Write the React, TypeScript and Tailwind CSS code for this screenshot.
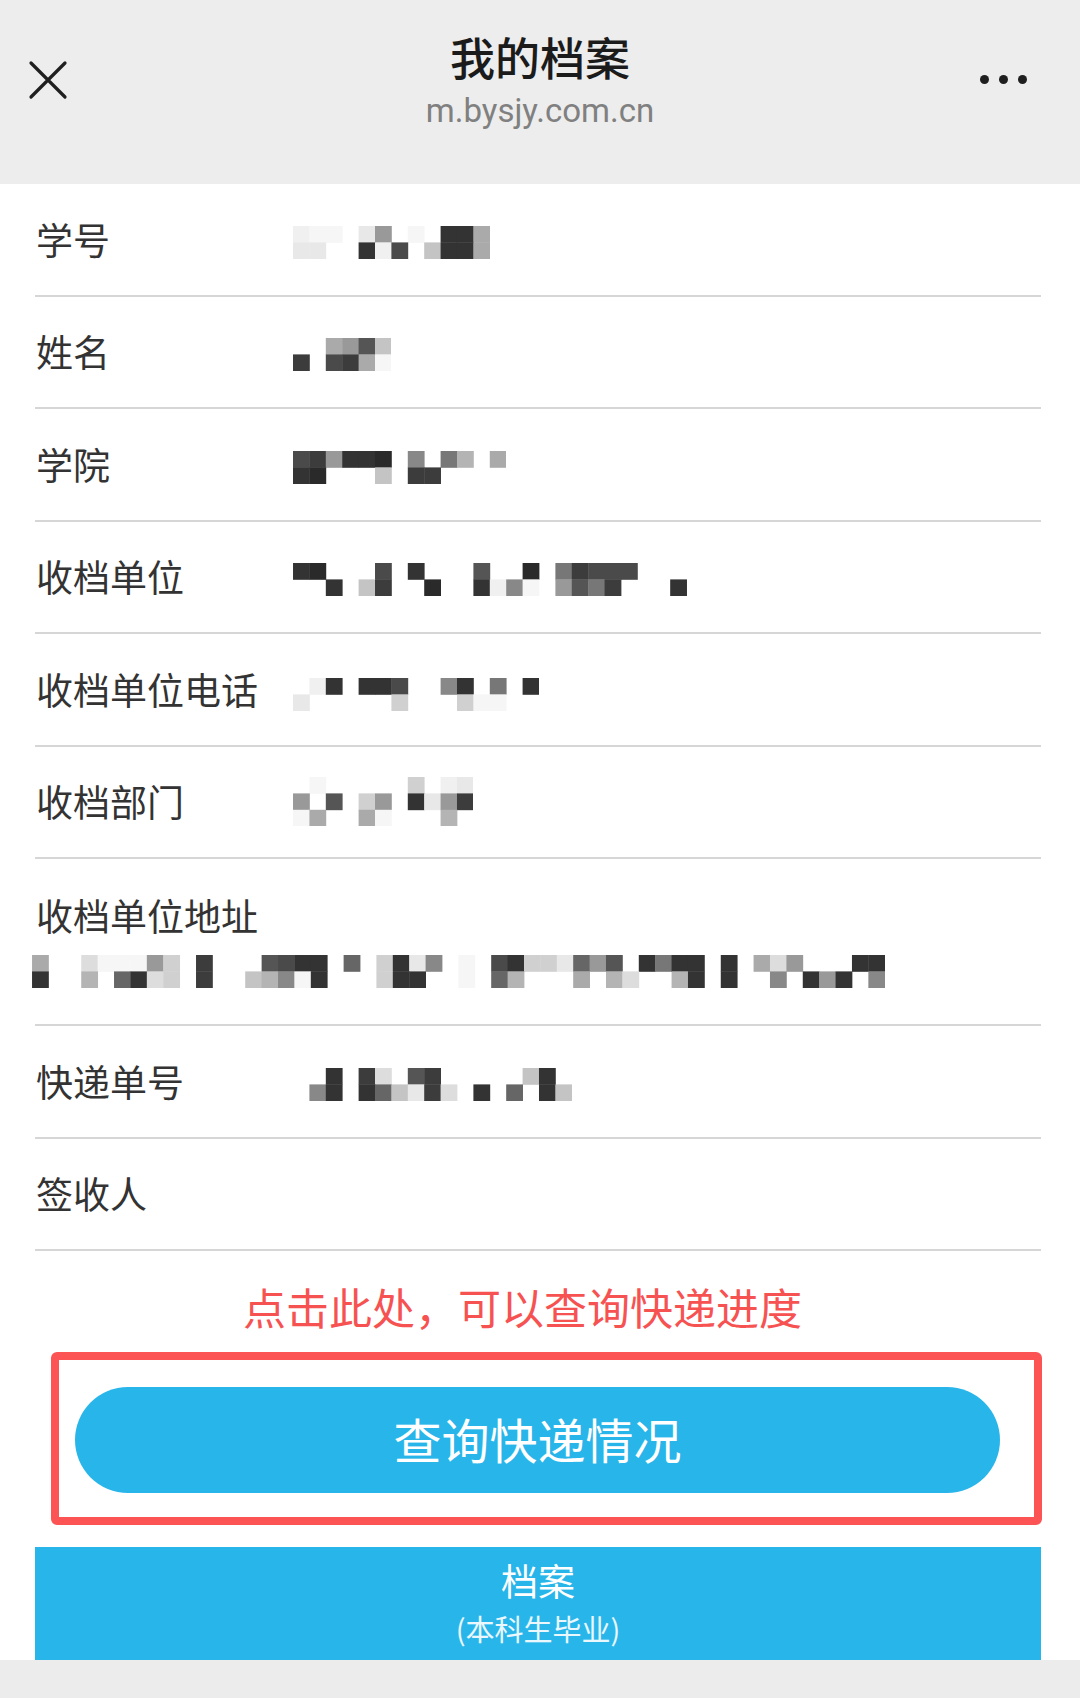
import React from 'react';

// grey levels used by the pixelated (masked) values
const SHADES: Record<string, string> = {
  a: '#2a2a2a',
  b: '#333333',
  c: '#3c3c3c',
  d: '#4a4a4a',
  e: '#555555',
  f: '#666666',
  g: '#777777',
  h: '#888888',
  i: '#999999',
  j: '#aaaaaa',
  k: '#b4b4b4',
  l: '#c4c4c4',
  m: '#d0d0d0',
  n: '#dddddd',
  o: '#e8e8e8',
  p: '#f0f0f0',
  q: '#f6f6f6',
};

const Mosaic: React.FC<{ rows: string[]; className?: string }> = ({ rows, className }) => {
  const cell = 16.4;
  const w = rows[0].length * cell;
  const h = rows.length * cell;
  return (
    <svg width={w} height={h} viewBox={`0 0 ${w} ${h}`} className={className}>
      {rows.flatMap((row, y) =>
        row.split('').map((ch, x) =>
          ch === '.' ? null : (
            <rect key={`${x}-${y}`} x={x * cell} y={y * cell} width={cell + 0.4} height={cell + 0.4} fill={SHADES[ch]} />
          )
        )
      )}
    </svg>
  );
};

type Field = { label: string; value?: string[]; shift?: string };

const TOP_FIELDS: Field[] = [
  { label: '学号', value: ['pqq.oi.q.bbj', 'oo..bpd.lbbj'] },
  { label: '姓名', value: ['..jiel', 'c.dcjq'] },
  { label: '学院', value: ['dcibba.h.gk.j', 'ba...l.cc....'] },
  { label: '收档单位', value: ['ba...d.b...e..a.gcddd....', '..b.lc..a..bphq.iegc...b.'] },
  { label: '收档单位电话', value: ['.pb.bbd..hb.g.b', 'o.....m...mqq..'], shift: 'mt-[10px]' },
  { label: '收档部门', value: ['.q.....m.po', 'i.e.mi.boic', 'qj..jq...k.'], shift: 'mt-0' },
];

const ADDRESS = [
  'j..nqqqim.c...edbb.f.mboh.q.dbmmofie.bgbb.b.jni...bb',
  'b..k.fbnm.c..lkhqb...mbb..q.fk...j.kn..kb.b..h.bib.h',
];

const BOTTOM_FIELDS: Field[] = [
  { label: '快递单号', value: ['..b.cn.ec.....lb.', '.hb.bflocn.b.f.bl'] },
  { label: '签收人' },
];

const Row: React.FC<{ field: Field }> = ({ field }) => (
  <div className="flex items-center h-[112.5px] border-b-2 border-[#d6d6d6]">
    <div className="w-[258px] pl-px text-[37px] leading-none text-[#333333]">{field.label}</div>
    {field.value && <Mosaic rows={field.value} className={field.shift ?? 'mt-[6px]'} />}
  </div>
);

export default function App() {
  return (
    <div className="w-[1080px] h-[1698px] overflow-hidden bg-white font-['Noto_Sans_CJK_SC','Noto_Sans',sans-serif]">
      {/* top bar */}
      <div className="h-[184px] bg-[#ededed] grid grid-cols-[1fr_auto_1fr] items-start">
        <div className="pl-[28px] mt-[60px]">
          <svg width="40" height="40" viewBox="0 0 40 40">
            <path d="M3 3 L37 37 M37 3 L3 37" stroke="#1f1f1f" strokeWidth="3.2" strokeLinecap="round" />
          </svg>
        </div>
        <div className="flex flex-col items-center pt-[33px]">
          <div className="text-[45px] leading-[48px] font-medium text-[#1b1b1b]">我的档案</div>
          <div className="mt-[10px] text-[33px] leading-[40px] text-[#808080] font-['Roboto',sans-serif]">m.bysjy.com.cn</div>
        </div>
        <div className="flex justify-end gap-[10px] pr-[53px] mt-[75px]">
          <span className="w-[9px] h-[9px] rounded-full bg-[#1f1f1f]" />
          <span className="w-[9px] h-[9px] rounded-full bg-[#1f1f1f]" />
          <span className="w-[9px] h-[9px] rounded-full bg-[#1f1f1f]" />
        </div>
      </div>

      {/* record list */}
      <div className="ml-[35px] mr-[39px]">
        {TOP_FIELDS.map((f) => (
          <Row key={f.label} field={f} />
        ))}
        <div className="h-[167px] border-b-2 border-[#d6d6d6] pt-[32px]">
          <div className="pl-px text-[37px] leading-[48px] text-[#333333]">收档单位地址</div>
          <Mosaic rows={ADDRESS} className="mt-[16px] -ml-[3px]" />
        </div>
        {BOTTOM_FIELDS.map((f) => (
          <Row key={f.label} field={f} />
        ))}
      </div>

      <div className="h-[101px] pt-[9px] pl-[243px] flex items-center">
        <span className="text-[43px] leading-none text-[#f75252]">点击此处，可以查询快递进度</span>
      </div>

      <div className="ml-[51px] w-[991px] h-[173px] border-[8px] border-[#fc5454] rounded-[6px] pl-[16px] pt-[27px]">
        <button className="w-[925px] h-[106px] rounded-full bg-[#28b5ea] text-white text-[48px] leading-none pb-[5px]">
          查询快递情况
        </button>
      </div>

      <div className="mt-[22px] ml-[35px] w-[1006px] h-[113px] bg-[#28b5ea] flex flex-col items-center pt-[11px] text-white">
        <div className="text-[37px] leading-[44px]">档案</div>
        <div className="mt-[8px] text-[29px] leading-[36px] text-white/90">(本科生毕业)</div>
      </div>

      <div className="h-[38px] bg-[#ececec]" />
    </div>
  );
}
